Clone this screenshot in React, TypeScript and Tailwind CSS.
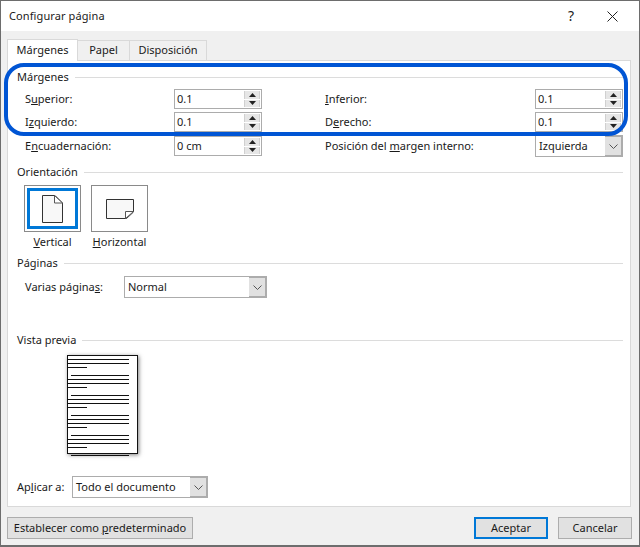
import React from "react"

const font = { fontFamily: '"Noto Sans", "Open Sans", sans-serif' }

function SectionHeader({ title }: { title: string }) {
  return (
    <div className="flex items-center gap-[6px] h-[16px] text-[11px] leading-[16px] text-[#1a1a1a]">
      <span>{title}</span>
      <div className="flex-1 h-px bg-[#dcdcdc]" />
    </div>
  )
}

function Spinner({ value }: { value: string }) {
  return (
    <div className="flex w-[88px] h-[20px] border border-[#acacac] bg-white">
      <span className="flex-1 pl-[2px] text-[11px] leading-[18px] text-[#1a1a1a]">{value}</span>
      <div className="flex flex-col gap-px w-[16px] my-px mr-px">
        <div className="flex-1 flex items-center justify-center bg-[#e6e6e6] border-x border-[#d0d0d0]">
          <svg width="7" height="4" viewBox="0 0 7 4"><path d="M3.5 0L7 4H0z" fill="#222" /></svg>
        </div>
        <div className="flex-1 flex items-center justify-center bg-[#e6e6e6] border-x border-[#d0d0d0]">
          <svg width="7" height="4" viewBox="0 0 7 4"><path d="M0 0H7L3.5 4z" fill="#222" /></svg>
        </div>
      </div>
    </div>
  )
}

function Select({ value, width }: { value: string; width: string }) {
  return (
    <div className={`flex h-[22px] border border-[#acacac] bg-white ${width}`}>
      <span className="flex-1 pl-[3px] text-[11px] leading-[20px] text-[#1a1a1a]">{value}</span>
      <div className="flex items-center justify-center w-[18px] bg-[#e1e1e1] border-2 border-[#acacac] border-l-0 -my-px -mr-px">
        <svg width="9" height="5" viewBox="0 0 9 5"><path d="M0.5 0.5L4.5 4.5L8.5 0.5" fill="none" stroke="#555" /></svg>
      </div>
    </div>
  )
}

function Row({ label, children, rightLabel, right }: { label: React.ReactNode; children: React.ReactNode; rightLabel: React.ReactNode; right: React.ReactNode }) {
  return (
    <div className="flex items-center pl-[8px] text-[11px] text-[#1a1a1a]">
      <div className="w-[149px]">{label}</div>
      {children}
      <div className="w-[63px]" />
      <div className="w-[210px]">{rightLabel}</div>
      {right}
    </div>
  )
}

function PageIcon({ landscape }: { landscape?: boolean }) {
  if (landscape) {
    return (
      <svg width="28" height="20" viewBox="0 0 28 20">
        <path d="M0.5 0.5H27.5V13L20.5 19.5H0.5z" fill="#f8f8f8" stroke="#333" />
        <path d="M27.5 12.5H19.5V19.5z" fill="#fff" stroke="#555" />
      </svg>
    )
  }
  return (
    <svg width="21" height="28" viewBox="0 0 21 28">
      <path d="M0.5 0.5H13L20.5 8V27.5H0.5z" fill="#f8f8f8" stroke="#333" />
      <path d="M12.5 0.5V8H20.5z" fill="#fff" stroke="#555" />
    </svg>
  )
}

const previewLines = [
  [68, 129, 359], [68, 129, 363], [68, 87, 367],
  [71, 129, 375], [68, 129, 379], [68, 129, 383], [68, 87, 387],
  [71, 129, 395], [68, 129, 399], [68, 129, 403], [68, 87, 407],
  [71, 129, 415], [68, 129, 419], [68, 129, 423], [68, 87, 427],
  [71, 129, 435], [68, 129, 439], [68, 129, 443], [68, 87, 447],
  [71, 129, 455],
]

function Preview() {
  return (
    <div className="relative w-[71px] h-[99px] ml-[50px] bg-white border border-[#111] shadow-[1px_1px_4px_rgba(0,0,0,0.5)]">
      <svg className="absolute left-[-1px] top-[-1px] overflow-visible" width="71" height="99" viewBox="0 0 71 99">
        {previewLines.map(([x1, x2, y]) => (
          <line key={y} x1={x1 - 67} x2={x2 - 67} y1={y - 355 + 0.5} y2={y - 355 + 0.5} stroke="#111" />
        ))}
      </svg>
    </div>
  )
}

export default function App() {
  return (
    <div className="relative w-[640px] h-[547px] bg-[#f0f0f0] border-x border-b-2 border-t border-[#6d6d6d] overflow-hidden" style={font}>
      {/* barra de titulo */}
      <div className="flex items-center h-[30px] bg-white pl-[8px]">
        <span className="flex-1 text-[11px] tracking-[0.1px] text-[#1a1a1a]">Configurar página</span>
        <span className="w-[20px] mb-[2px] text-center text-[14px] text-[#222] mr-[26px]">?</span>
        <svg className="mr-[21px]" width="11" height="11" viewBox="0 0 11 11">
          <path d="M0.5 0.5L10.5 10.5M10.5 0.5L0.5 10.5" stroke="#222" />
        </svg>
      </div>

      {/* pestañas */}
      <div className="flex items-end h-[29px] pl-[6px] text-[11px] text-[#1a1a1a]">
        <div className="relative z-10 flex items-center justify-center w-[71px] h-[22px] -mb-px bg-white border border-b-0 border-[#d9d9d9]">Márgenes</div>
        <div className="flex items-center justify-center w-[52px] h-[20px] bg-[#f0f0f0] border border-l-0 border-b-0 border-[#d9d9d9]">Papel</div>
        <div className="flex items-center justify-center w-[77px] h-[20px] bg-[#f0f0f0] border border-l-0 border-b-0 border-[#d9d9d9]">Disposición</div>
      </div>

      {/* panel */}
      <div className="flex flex-col w-[624px] h-[447px] ml-[6px] bg-white border border-[#d9d9d9] pl-[9px] pr-[7px] pt-[8px]">
        <SectionHeader title="Márgenes" />
        <div className="flex flex-col gap-[3px] mt-[4px]">
          <Row label={<>S<u>u</u>perior:</>} rightLabel={<><u>I</u>nferior:</>} right={<Spinner value="0.1" />}>
            <Spinner value="0.1" />
          </Row>
          <Row label={<>I<u>z</u>quierdo:</>} rightLabel={<>D<u>e</u>recho:</>} right={<Spinner value="0.1" />}>
            <Spinner value="0.1" />
          </Row>
        </div>
        <div className="mt-[3px]">
          <Row label={<>E<u>n</u>cuadernación:</>} rightLabel={<>Posición del <u>m</u>argen interno:</>} right={<Select value="Izquierda" width="w-[88px]" />}>
            <Spinner value="0 cm" />
          </Row>
        </div>

        <div className="mt-[7px]"><SectionHeader title="Orientación" /></div>
        <div className="flex gap-[10px] ml-[7px] mt-[5px]">
          <div className="flex flex-col items-center">
            <div className="w-[57px] h-[47px] border border-[#8a8a8a] p-[2px]">
              <div className="flex items-center justify-center w-full h-full border-[3px] border-[#0078d7]">
                <PageIcon />
              </div>
            </div>
            <span className="mt-[2px] text-[11px] leading-[16px] text-[#1a1a1a]"><u>V</u>ertical</span>
          </div>
          <div className="flex flex-col items-center">
            <div className="flex items-center justify-center w-[57px] h-[47px] border border-[#8a8a8a]">
              <PageIcon landscape />
            </div>
            <span className="mt-[2px] text-[11px] leading-[16px] text-[#1a1a1a]"><u>H</u>orizontal</span>
          </div>
        </div>

        <div className="mt-[5px]"><SectionHeader title="Páginas" /></div>
        <div className="flex items-center ml-[8px] mt-[5px] text-[11px] text-[#1a1a1a]">
          <div className="w-[99px]">Varias página<u>s</u>:</div>
          <Select value="Normal" width="w-[143px]" />
        </div>

        <div className="mt-[34px]"><SectionHeader title="Vista previa" /></div>
        <div className="mt-[7px]"><Preview /></div>

        <div className="flex items-center mt-[22px] text-[11px] text-[#1a1a1a]">
          <div className="w-[55px]">Ap<u>l</u>icar a:</div>
          <Select value="Todo el documento" width="w-[136px]" />
        </div>
      </div>

      {/* botones */}
      <div className="flex items-center h-[22px] mt-[10px] pl-[6px] pr-[7px] text-[11px] text-[#1a1a1a]">
        <button className="w-[186px] h-[22px] whitespace-nowrap bg-[#e1e1e1] border border-[#adadad]">Establecer como <u>p</u>redeterminado</button>
        <div className="flex-1" />
        <button className="w-[74px] h-[22px] bg-[#e1e1e1] border-2 border-[#0078d7]">Aceptar</button>
        <button className="w-[74px] h-[22px] ml-[10px] bg-[#e1e1e1] border border-[#adadad]">Cancelar</button>
      </div>

      {/* marca azul sobre la captura */}
      <div className="absolute left-[3px] top-[62px] w-[624px] h-[73px] rounded-[20px] border-[4px] border-[#0055d4] pointer-events-none" />
    </div>
  )
}
